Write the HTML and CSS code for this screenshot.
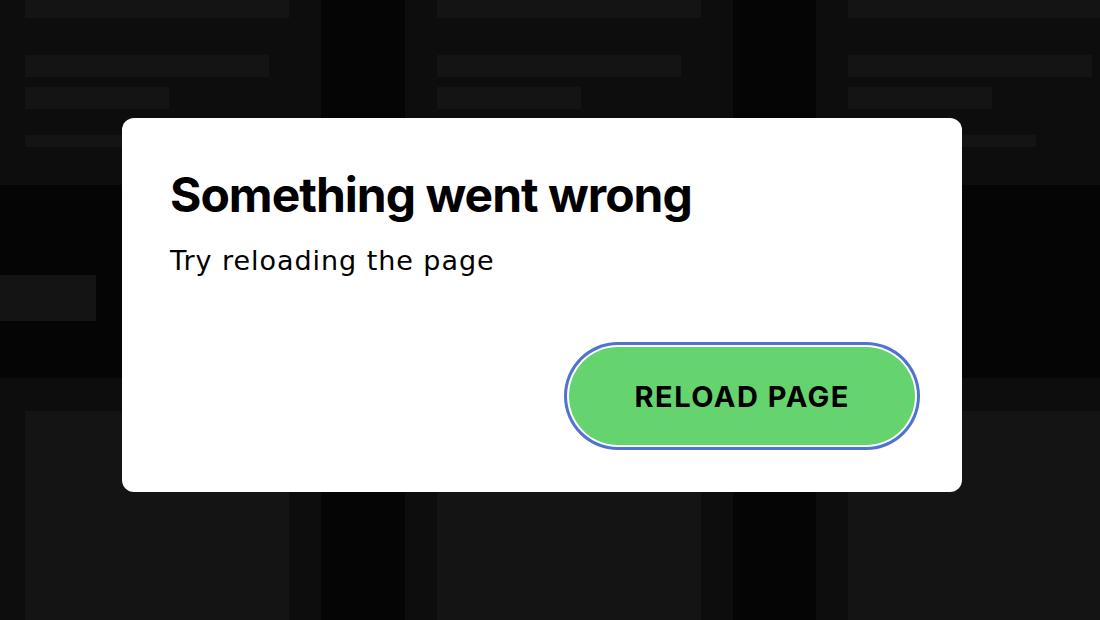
FILE: index.html
```html
<!DOCTYPE html>
<html lang="en">
<head>
<meta charset="utf-8">
<title>Something went wrong</title>
<link rel="stylesheet" href="styles.css">
</head>
<body>
<div class="page">
  <div class="row row-top">
    <div class="card">
      <div class="sk sk-title"></div>
      <div class="sk sk-line"></div>
      <div class="sk sk-short"></div>
      <div class="sk sk-meta"></div>
    </div>
    <div class="card">
      <div class="sk sk-title"></div>
      <div class="sk sk-line"></div>
      <div class="sk sk-short"></div>
      <div class="sk sk-meta"></div>
    </div>
    <div class="card">
      <div class="sk sk-title"></div>
      <div class="sk sk-line"></div>
      <div class="sk sk-short"></div>
      <div class="sk sk-meta"></div>
    </div>
  </div>
  <div class="sk sk-tab"></div>
  <div class="row row-bottom">
    <div class="card card-media"><div class="sk sk-media"></div></div>
    <div class="card card-media"><div class="sk sk-media"></div></div>
    <div class="card card-media"><div class="sk sk-media"></div></div>
  </div>
</div>

<div class="modal" role="alertdialog" aria-labelledby="err-title">
  <h1 class="modal-title" id="err-title">Something went wrong</h1>
  <p class="modal-text">Try reloading the page</p>
  <button class="reload-btn" type="button">RELOAD PAGE</button>
</div>
</body>
</html>
```

FILE: styles.css
```css
html, body {
  margin: 0;
  padding: 0;
  height: 100%;
  overflow: hidden;
}

body {
  background: #050505;
  font-family: Inter, "Liberation Sans", sans-serif;
}

.page {
  margin: -38px 0 0 -7px;
  width: 1240px;
}

.row {
  display: grid;
  grid-template-columns: repeat(3, 328px);
  column-gap: 83.5px;
}

.card {
  background: #0d0d0d;
  border-radius: 8px;
  padding: 32px 32px 38px;
}

.sk {
  background: #141414;
}

.sk-title {
  width: 264px;
  height: 24px;
  margin-bottom: 37px;
}

.sk-line {
  width: 244px;
  height: 22px;
  margin-bottom: 10px;
}

.sk-short {
  width: 144px;
  height: 22px;
  margin-bottom: 26px;
}

.sk-meta {
  width: 188px;
  height: 12px;
}

.sk-tab {
  width: 96px;
  height: 46px;
  margin: 90px 0 0 7px;
}

.row-bottom {
  margin-top: 57px;
}

.card-media {
  padding: 33px 32px 0;
  height: 400px;
}

.sk-media {
  width: 264px;
  height: 100%;
}

.modal {
  position: fixed;
  left: 122px;
  top: 118px;
  width: 840px;
  height: 374px;
  box-sizing: border-box;
  padding: 48px 47px 47px 48px;
  background: #ffffff;
  border-radius: 12px;
  display: flex;
  flex-direction: column;
  color: #000;
}

.modal-title {
  margin: 0;
  font-size: 48px;
  line-height: 58px;
  font-weight: 700;
  letter-spacing: -1px;
}

.modal-text {
  margin: 21px 0 0;
  font-family: "DejaVu Sans", Inter, sans-serif;
  font-size: 27px;
  line-height: 31px;
  font-weight: 400;
  letter-spacing: 0.95px;
}

.reload-btn {
  margin-top: auto;
  align-self: flex-end;
  height: 98px;
  padding: 0 65px;
  border: none;
  border-radius: 49px;
  background: #65d46e;
  color: #000;
  font-family: Inter, "Liberation Sans", sans-serif;
  font-size: 29px;
  font-weight: 700;
  letter-spacing: 1.5px;
  box-shadow: 0 0 0 2px #ffffff, 0 0 0 5px #5073cf;
  cursor: pointer;
}
```
